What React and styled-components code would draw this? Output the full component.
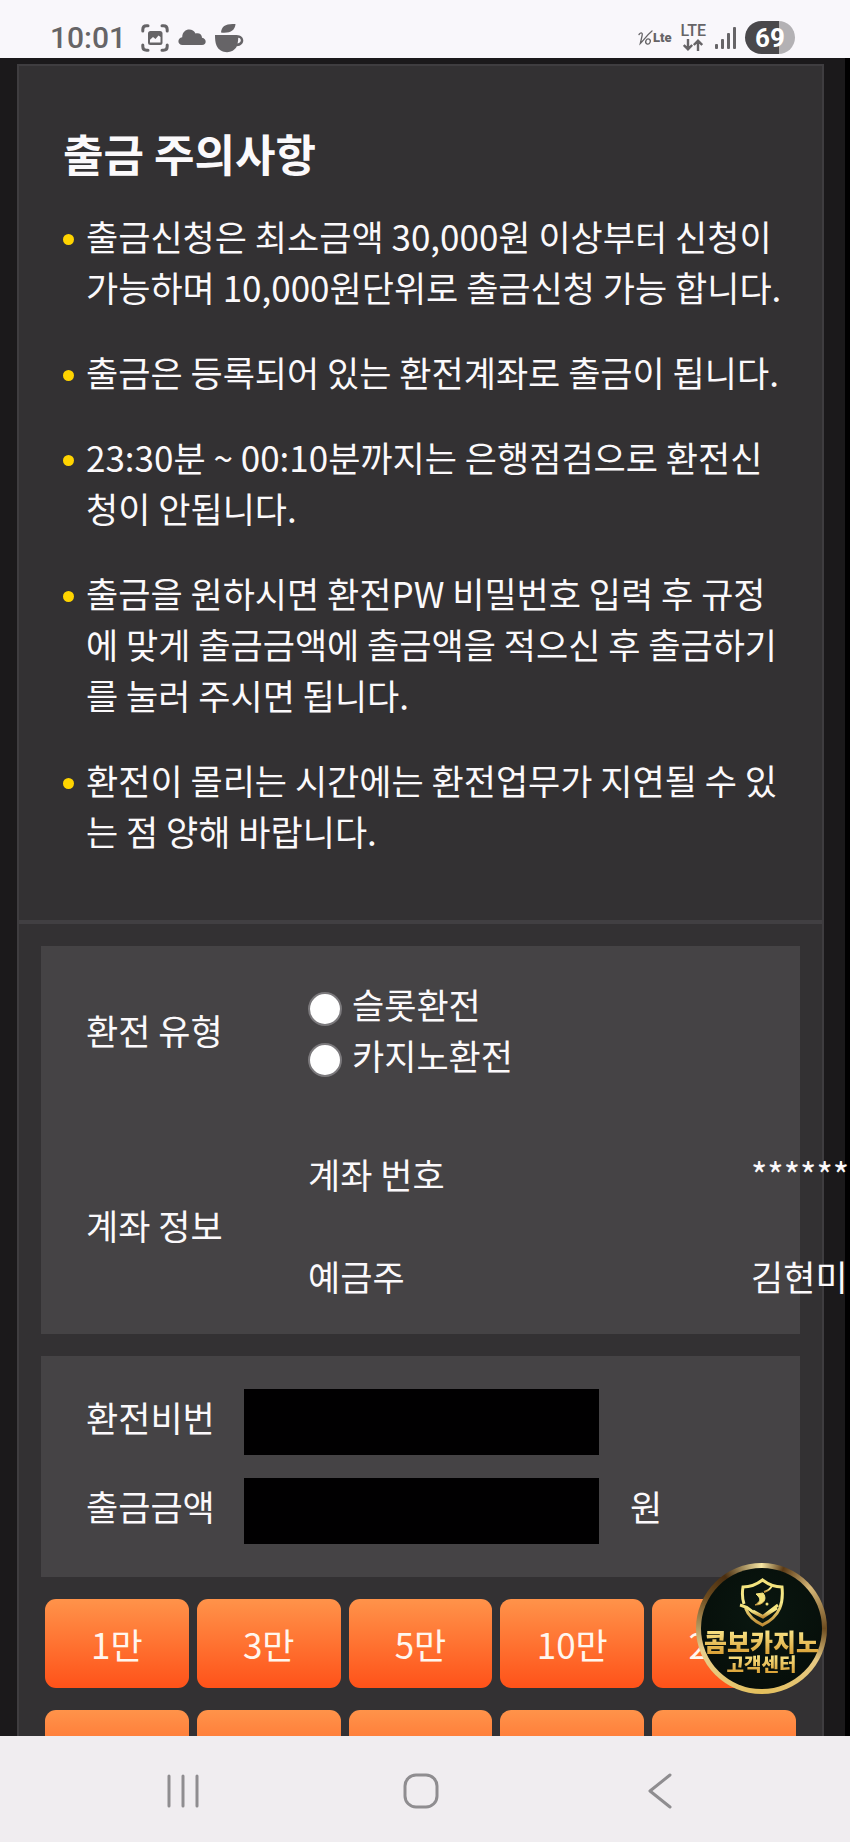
import React, { useState } from 'react';
import styled, { createGlobalStyle } from 'styled-components';

const notices = [
  '출금신청은 최소금액 30,000원 이상부터 신청이 가능하며 10,000원단위로 출금신청 가능 합니다.',
  '출금은 등록되어 있는 환전계좌로 출금이 됩니다.',
  '23:30분 ~ 00:10분까지는 은행점검으로 환전신청이 안됩니다.',
  '출금을 원하시면 환전PW 비밀번호 입력 후 규정에 맞게 출금금액에 출금액을 적으신 후 출금하기를 눌러 주시면 됩니다.',
  '환전이 몰리는 시간에는 환전업무가 지연될 수 있는 점 양해 바랍니다.',
];

const amounts = [1, 3, 5, 10, 20, 30, 50, 100, 200, 300];

const StatusBar = () => (
  <Status>
    <StatusGroup>
      <Time>10:01</Time>
      <svg width="28" height="28" viewBox="0 0 28 28" fill="none" stroke="#666467" strokeWidth="3" strokeLinecap="round">
        <path d="M1.8 7V5.5Q1.8 1.8 5.5 1.8H7M21 1.8h1.5q3.7 0 3.7 3.7V7M26.200 21v1.500q0 3.700-3.700 3.700H21M7 26.200H5.500q-3.700 0-3.700-3.700V21" />
        <path d="M9.500 7h9.500q2.500 0 2.500 2.500v9q0 2.500-2.500 2.500H9.500Q7 21 7 18.500v-9Q7 7 9.500 7Z" fill="#666467" stroke="none" />
        <path d="M9 18.500v-2.700l3-2.800 2.500 2 3-3.500 2 1.500v5.500Z" fill="#f9f7fb" stroke="none" />
      </svg>
      <svg width="28" height="28" viewBox="0 0 28 28" fill="#666467">
        <path d="M4.500 21C-.8 21-1 14 4.200 13.300 4.300 4 15 3.500 17.500 9.500c4-1 6.500 1.200 6.500 4.300 5 .8 4.800 7.200 0 7.200Z" />
      </svg>
      <Cup width="29" height="30" viewBox="0 0 29 30" fill="#666467">
        <path d="M6 9.500C6.500 3 11 .3 20.500 1 20 7.500 15 10.500 6 9.500Z" />
        <path fillRule="evenodd" d="M0 12h21.500c9 0 9 11 .3 11.300C18 31.500 5 31 1.500 22.500.3 19.500 0 16 0 12Zm23.200 2.700c0 2.300-.2 4-.7 5.800 4.300-.2 4.300-5.800.7-5.800Z" />
      </Cup>
    </StatusGroup>
    <StatusGroup>
      <Volte>
        <svg width="15" height="16" viewBox="0 0 15 16" fill="none" stroke="#666467" strokeWidth="1.300" strokeLinecap="round">
          <path d="M1 4.500C3 2 5 2.500 4 6L2.300 13.500C6 10 9 5 14 1" />
          <ellipse cx="10" cy="11.500" rx="2.200" ry="2.600" transform="rotate(25 10 11.500)" />
        </svg>
        <b>Lte</b>
      </Volte>
      <Lte>
        <span>LTE</span>
        <svg width="20" height="12" viewBox="0 0 20 12" fill="none" stroke="#666467" strokeWidth="2.400">
          <path d="M5 0v10M.8 6 5 10.200 9.200 6M15 12V2M10.800 6 15 1.800 19.200 6" />
        </svg>
      </Lte>
      <svg width="21" height="24" viewBox="0 0 21 24" fill="#666467">
        <rect x="0" y="18" width="3" height="5" rx="1" />
        <rect x="6" y="13" width="3" height="10" rx="1" />
        <rect x="12" y="7" width="3" height="16" rx="1" />
        <rect x="18" y="1" width="3" height="22" rx="1" />
      </svg>
      <Battery>69</Battery>
    </StatusGroup>
  </Status>
);

const SupportButton = () => (
  <Support type="button">
    <svg width="46" height="52" viewBox="0 0 46 52" fill="none" stroke="url(#gold)" strokeWidth="3">
      <defs>
        <linearGradient id="gold" x1="0" y1="0" x2="0" y2="1">
          <stop offset="0" stopColor="#f3e27a" />
          <stop offset="0.500" stopColor="#f6e98a" />
          <stop offset="1" stopColor="#c08c34" />
        </linearGradient>
      </defs>
      <path d="M5 27C3 21 3 16 4 10c8 0 13-2 19.500-7C30 8 36 10 43 10c1.500 15-1 29-19.500 38C14 43.500 9 38 6.500 31" />
      <path d="M1 28c8 2 9 4 13 7l10 5 14-9M14 34l10 5.500L39 28" />
      <path d="m17 17 7-1c4 5 2 12-8 12 5-3 6-6 3-9Z" fill="#f3e27a" strokeWidth="1" />
      <path d="M25 15c4-1 6-3 8-6" strokeWidth="2" />
      <circle cx="28" cy="27" r="1.500" fill="#f3e27a" stroke="none" />
    </svg>
    <Gold $size={25}>콤보카지노</Gold>
    <Gold $size={19}>고객센터</Gold>
  </Support>
);

const App = () => {
  const [type, setType] = useState('');
  const [amount, setAmount] = useState('');

  return (
    <Page>
      <GlobalStyle />
      <StatusBar />
      <Main>
        <Panel>
          <Notice>
            <Title>출금 주의사항</Title>
            <NoticeList>
              {notices.map(text => <NoticeItem key={text}>{text}</NoticeItem>)}
            </NoticeList>
          </Notice>
          <Form>
            <InfoBox>
              <InfoRow>
                <span id="type-label">환전 유형</span>
                <div role="radiogroup" aria-labelledby="type-label">
                  {['슬롯환전', '카지노환전'].map(name => (
                    <RadioLabel key={name}>
                      <Radio
                        type="radio"
                        name="type"
                        checked={type === name}
                        onChange={() => setType(name)}
                      />
                      {name}
                    </RadioLabel>
                  ))}
                </div>
              </InfoRow>
              <InfoRow>
                <span>계좌 정보</span>
                <Account>
                  <dt>계좌 번호</dt>
                  <dd>**********</dd>
                  <dt>예금주</dt>
                  <dd>김현미</dd>
                </Account>
              </InfoRow>
            </InfoBox>
            <FieldBox>
              <Field>
                <FieldLabel htmlFor="pin">환전비번</FieldLabel>
                <Input id="pin" type="password" />
              </Field>
              <Field>
                <FieldLabel htmlFor="amount">출금금액</FieldLabel>
                <Input id="amount" value={amount} onChange={e => setAmount(e.target.value)} />
                <Unit>원</Unit>
              </Field>
            </FieldBox>
            <Amounts>
              {amounts.map(n => (
                <AmountButton key={n} type="button" onClick={() => setAmount(String(n * 10000))}>
                  {n}만
                </AmountButton>
              ))}
            </Amounts>
          </Form>
        </Panel>
        <SupportButton />
      </Main>
      <NavBar>
        <NavButton type="button" aria-label="최근 앱">
          <svg width="38" height="38" viewBox="0 0 38 38">
            <path d="M5 4v30M19 4v30M33 4v30" />
          </svg>
        </NavButton>
        <NavButton type="button" aria-label="홈">
          <svg width="38" height="38" viewBox="0 0 38 38">
            <rect x="3" y="3" width="32" height="32" rx="11" />
          </svg>
        </NavButton>
        <NavButton type="button" aria-label="뒤로">
          <svg width="38" height="38" viewBox="0 0 38 38">
            <path d="M29 3 9 19l20 16" />
          </svg>
        </NavButton>
      </NavBar>
    </Page>
  );
};

export default App;

const GlobalStyle = createGlobalStyle`
  * {
    box-sizing: border-box;
  }

  body {
    margin: 0;
    font: 35px/51px 'Noto Sans CJK KR', sans-serif;
    color: #fbf9fb;
  }

  button, input {
    font: inherit;
    color: inherit;
  }
`;

const Page = styled.div`
  display: flex;
  flex-direction: column;
  height: 100vh;
  overflow: hidden;
`;

const Status = styled.header`
  display: flex;
  flex: none;
  justify-content: space-between;
  align-items: center;
  height: 58px;
  padding: 17px 55px 0 50px;
  background: #f9f7fb;
  color: #666467;
  font-family: Roboto, sans-serif;
  line-height: 1;
`;

const StatusGroup = styled.div`
  display: flex;
  align-items: center;
  gap: 9px;
`;

const Time = styled.span`
  margin-right: 6px;
  font-size: 30px;
  font-weight: 500;
`;

const Cup = styled.svg`
  display: block;
`;

const Volte = styled.span`
  display: flex;
  align-items: center;
  font-size: 13px;
  font-weight: 900;
`;

const Lte = styled.span`
  display: flex;
  flex-direction: column;
  align-items: center;
  gap: 1px;
  font-size: 16px;
  line-height: 14px;
  font-weight: 500;
`;

const Battery = styled.span`
  width: 50px;
  height: 33px;
  border-radius: 17px;
  background: linear-gradient(to right, #4a484b 34px, #b3b1b4 34px);
  color: #ffffff;
  font-size: 26px;
  line-height: 34px;
  font-weight: 700;
  text-align: center;
`;

const Main = styled.main`
  position: relative;
  flex: 1;
  min-height: 0;
  overflow: hidden;
  padding: 6px 26px 0 17px;
  background: linear-gradient(to left, #010001 5px, #1b191b 5px);
`;

const Panel = styled.div`
  border: 2px solid #3f3d40;
  background: #333133;
`;

const Notice = styled.section`
  padding: 54px 40px 64px 44px;
  border-bottom: 4px solid #413f42;
`;

const Title = styled.h1`
  margin: 0 0 24px;
  font-size: 44px;
  line-height: 66px;
  font-weight: 700;
`;

const NoticeList = styled.ul`
  display: flex;
  flex-direction: column;
  gap: 34px;
  margin: 0;
  padding: 0;
  list-style: none;
`;

const NoticeItem = styled.li`
  display: flex;
  gap: 12px;

  &::before {
    content: '';
    flex: none;
    width: 11px;
    height: 11px;
    margin-top: 24px;
    border-radius: 50%;
    background: #ffd400;
  }
`;

const Form = styled.form`
  display: flex;
  flex-direction: column;
  gap: 22px;
  padding: 22px;
`;

const InfoBox = styled.div`
  padding: 32px 49px 8px 45px;
  background: #454345;
`;

const InfoRow = styled.div`
  display: grid;
  grid-template-columns: 222px 1fr;
  align-items: center;

  & + & {
    margin-top: 42px;
  }
`;

const RadioLabel = styled.label`
  display: flex;
  align-items: center;
  gap: 10px;
`;

const Radio = styled.input`
  appearance: none;
  width: 34px;
  height: 34px;
  margin: 10px 0 0;
  border: 2px solid #7b797c;
  border-radius: 50%;
  background: #ffffff;

  &:checked {
    border-width: 10px;
    border-color: #ff6a28;
  }
`;

const Account = styled.dl`
  display: grid;
  grid-template-columns: 100% auto;
  margin: 0;
  white-space: nowrap;

  dt, dd {
    margin: 0;
    padding: 26px 0 25px;
  }
`;

const FieldBox = styled.div`
  display: flex;
  flex-direction: column;
  gap: 23px;
  padding: 33px 45px;
  background: #454345;
`;

const Field = styled.div`
  display: flex;
  height: 66px;
`;

const FieldLabel = styled.label`
  width: 158px;
  padding-top: 2px;
`;

const Input = styled.input`
  width: 355px;
  padding: 0 12px;
  border: 0;
  background: #010001;
`;

const Unit = styled.span`
  margin-left: 31px;
  padding-top: 2px;
`;

const Amounts = styled.div`
  display: grid;
  grid-template-columns: repeat(5, 1fr);
  gap: 22px 8px;
  padding: 0 4px;
`;

const AmountButton = styled.button`
  height: 89px;
  padding: 0;
  border: 0;
  border-radius: 11px;
  background: linear-gradient(#ff934a, #ff5219);
  color: #fff6ee;
  cursor: pointer;
`;

const Support = styled.button`
  position: absolute;
  right: 23px;
  bottom: 42px;
  display: flex;
  flex-direction: column;
  align-items: center;
  width: 131px;
  height: 131px;
  padding: 9px 0 0;
  border: 5px solid transparent;
  border-radius: 50%;
  background:
    radial-gradient(circle at 50% 40%, #0a1710, #050c08) padding-box,
    conic-gradient(#f6e6a4, #5a3a16 20deg, #d8b878 50deg, #6d4c20 90deg, #e6c983 120deg, #e3bf5c 180deg, #e9cf8c 250deg, #6b4a1e 300deg, #4a2e10 325deg, #f6e6a4) border-box;
  cursor: pointer;

  svg {
    flex: none;
  }
`;

const Gold = styled.span`
  font-size: ${p => p.$size}px;
  line-height: ${p => p.$size}px;
  font-weight: 900;
  white-space: nowrap;
  background: linear-gradient(#fbe88c, #d9a136);
  background-clip: text;
  color: transparent;
`;

const NavBar = styled.nav`
  display: grid;
  grid-template-columns: repeat(3, 1fr);
  flex: none;
  height: 106px;
  padding: 4px 71px 0 64px;
  background: #f0edf0;
`;

const NavButton = styled.button`
  display: flex;
  align-items: center;
  justify-content: center;
  border: 0;
  background: none;

  svg {
    fill: none;
    stroke: #8f8d90;
    stroke-width: 3;
    stroke-linecap: round;
    stroke-linejoin: round;
  }
`;
